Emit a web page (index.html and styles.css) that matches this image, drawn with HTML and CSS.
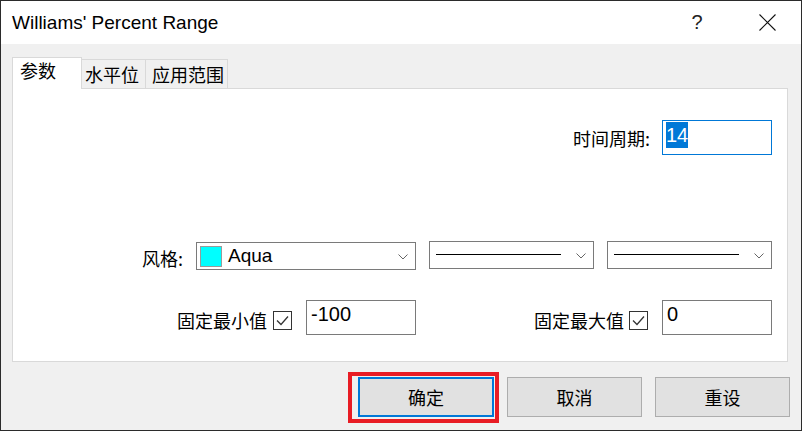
FILE: index.html
```html
<!DOCTYPE html>
<html>
<head>
<meta charset="utf-8">
<link rel="stylesheet" href="styles.css">
</head>
<body>
<div class="window">
  <div class="titlebar">
    <div class="title">Williams' Percent Range</div>
    <div class="tb-btn help">?</div>
    <div class="tb-btn close">
      <svg width="17" height="17" viewBox="0 0 17 17"><path d="M0.5 0.5 L16.5 16.5 M16.5 0.5 L0.5 16.5" stroke="#111" stroke-width="1.1" fill="none"/></svg>
    </div>
  </div>
  <div class="body">
    <div class="tabs">
      <div class="tab active">参数</div>
      <div class="tab">水平位</div>
      <div class="tab last">应用范围</div>
    </div>
    <div class="panel">
      <div class="row row1">
        <div class="field span2">
          <span class="label">时间周期:</span>
          <div class="input focused"><span class="sel">14</span></div>
        </div>
      </div>
      <div class="row row2">
        <div class="field">
          <span class="label style-label">风格:</span>
          <div class="combo wide">
            <span class="swatch"></span>
            <span class="combo-text">Aqua</span>
            <svg class="chev" width="10" height="6" viewBox="0 0 10 6"><path d="M0.5 0.5 L5 5 L9.5 0.5" stroke="#666" stroke-width="1" fill="none"/></svg>
          </div>
        </div>
        <div class="combo">
          <span class="line"></span>
          <svg class="chev" width="10" height="6" viewBox="0 0 10 6"><path d="M0.5 0.5 L5 5 L9.5 0.5" stroke="#666" stroke-width="1" fill="none"/></svg>
        </div>
        <div class="combo">
          <span class="line"></span>
          <svg class="chev" width="10" height="6" viewBox="0 0 10 6"><path d="M0.5 0.5 L5 5 L9.5 0.5" stroke="#666" stroke-width="1" fill="none"/></svg>
        </div>
      </div>
      <div class="row row3">
        <div class="field bottom">
          <span class="label low">固定最小值</span>
          <span class="check first"><svg width="17" height="17" viewBox="0 0 17 17"><path d="M3 8.5 L7 12.5 L14 4.5" stroke="#333" stroke-width="1.3" fill="none"/></svg></span>
          <div class="input"><span>-100</span></div>
        </div>
        <div class="field bottom span2">
          <span class="label low">固定最大值</span>
          <span class="check"><svg width="17" height="17" viewBox="0 0 17 17"><path d="M3 8.5 L7 12.5 L14 4.5" stroke="#333" stroke-width="1.3" fill="none"/></svg></span>
          <div class="input"><span>0</span></div>
        </div>
      </div>
    </div>
    <div class="buttons">
      <div class="btn default">确定</div>
      <div class="btn">取消</div>
      <div class="btn">重设</div>
    </div>
  </div>
  <div class="annot"></div>
</div>
</body>
</html>
```
FILE: styles.css
```css
html, body {
  margin: 0;
  padding: 0;
  background: #f0f0f0;
}
body {
  font-family: "Noto Sans CJK SC", "Noto Sans", sans-serif;
  color: #000;
}
.window {
  position: relative;
  width: 802px;
  height: 431px;
  box-sizing: border-box;
  border: 1px solid #2b2b2b;
  background: #f0f0f0;
  display: flex;
  flex-direction: column;
}
.titlebar {
  height: 43px;
  flex: none;
  background: #fff;
  display: flex;
  align-items: center;
  padding-left: 11px;
}
.title {
  flex: 1;
  font-family: "Liberation Sans", Arial, sans-serif;
  font-size: 19px;
  color: #000;
}
.tb-btn {
  width: 68px;
  height: 43px;
  display: flex;
  align-items: center;
  justify-content: center;
}
.help {
  font-family: "Liberation Sans", Arial, sans-serif;
  font-size: 20px;
  color: #222;
  margin-right: 2px;
}
.body {
  flex: 1;
  padding: 13px 13px 0 11px;
  display: flex;
  flex-direction: column;
}
.tabs {
  display: flex;
  align-items: flex-end;
  margin-bottom: -1px;
  position: relative;
  z-index: 1;
}
.tab {
  box-sizing: border-box;
  height: 30px;
  border: 1px solid #d9d9d9;
  border-left: 0;
  background: #f0f0f0;
  padding: 0 6px 0 3px;
  font-size: 18px;
  line-height: 28px;
}
.tab.last {
  padding: 0 3px 0 6px;
}
.tab.active {
  height: 32px;
  width: 70px;
  border-left: 1px solid #d9d9d9;
  border-bottom: 0;
  background: #fff;
  padding-left: 7px;
  line-height: 24px;
}
.panel {
  height: 274px;
  box-sizing: border-box;
  border: 1px solid #d9d9d9;
  background: #fff;
  padding: 31px 15px 0 0;
}
.row {
  display: grid;
  grid-template-columns: 1fr 165px 165px;
  column-gap: 13px;
}
.row1 { height: 35px; }
.row2 { height: 28px; margin-top: 86px; }
.row3 { height: 35px; margin-top: 31px; }
.span2 { grid-column: 2 / 4; }
.field {
  display: flex;
  justify-content: flex-end;
  align-items: center;
}
.field.bottom { align-items: flex-end; }
.label {
  font-size: 18px;
  line-height: 26px;
  white-space: nowrap;
  margin-right: 12px;
}
.style-label { margin-right: 13px; margin-top: 4px; }
.label.low { margin-right: 5px; margin-bottom: 2px; }
.input {
  box-sizing: border-box;
  width: 110px;
  height: 35px;
  border: 1px solid #7a7a7a;
  background: #fff;
  font-family: "Liberation Sans", Arial, sans-serif;
  font-size: 20px;
  line-height: 23px;
  padding: 2px 0 0 4px;
}
.input.focused {
  border-color: #0078d7;
  padding: 1px 0 0 3px;
}
.sel {
  display: inline-block;
  background: #0078d7;
  color: #fff;
  line-height: 26px;
}
.combo {
  box-sizing: border-box;
  height: 28px;
  border: 1px solid #7a7a7a;
  background: #fff;
  display: flex;
  align-items: center;
  padding: 0 7px 0 6px;
}
.combo.wide {
  width: 220px;
  padding-left: 3px;
}
.swatch {
  box-sizing: border-box;
  width: 22px;
  height: 21px;
  background: #00ffff;
  border: 1px solid #9a9a9a;
  margin-right: 6px;
}
.combo-text {
  font-family: "Liberation Sans", Arial, sans-serif;
  font-size: 19px;
  line-height: 22px;
}
.line {
  width: 125px;
  height: 1px;
  background: #000;
  margin-top: -1px;
}
.chev {
  margin-left: auto;
  margin-top: 1px;
}
.check {
  box-sizing: border-box;
  width: 19px;
  height: 19px;
  border: 1px solid #333;
  background: #fff;
  margin: 0 14px 5px 0;
  display: flex;
}
.check.first { margin-left: 1px; }
.buttons {
  display: flex;
  justify-content: flex-end;
  gap: 13px;
  margin-top: 15px;
  margin-right: -2px;
}
.btn {
  box-sizing: border-box;
  width: 135px;
  height: 40px;
  border: 1px solid #adadad;
  background: #e1e1e1;
  font-size: 18px;
  display: flex;
  align-items: center;
  justify-content: center;
}
.btn.default {
  width: 136px;
  border: 2px solid #0078d7;
}
.annot {
  position: absolute;
  left: 347px;
  top: 371px;
  width: 151px;
  height: 51px;
  box-sizing: border-box;
  border: 4px solid #e81c24;
}
```
